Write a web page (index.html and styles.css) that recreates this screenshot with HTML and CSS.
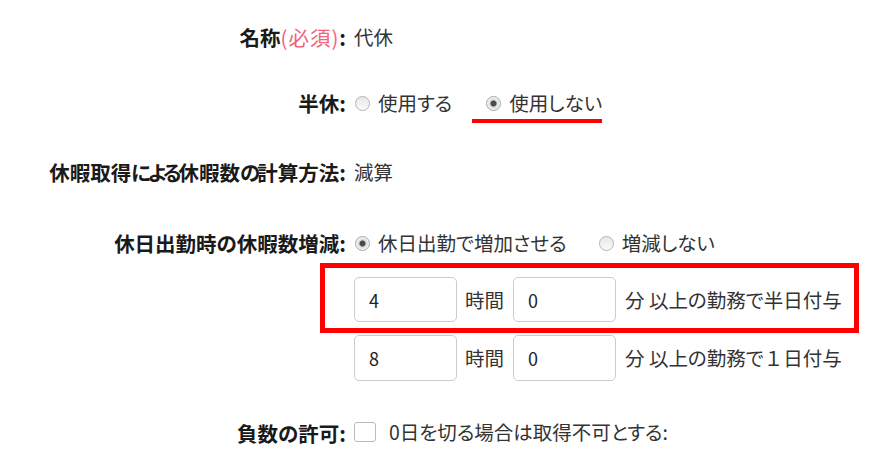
FILE: index.html
```html
<!DOCTYPE html>
<html lang="ja">
<head>
    <meta charset="UTF-8">
    <meta name="viewport" content="width=device-width, initial-scale=1.0">
    <title>休暇設定</title>
    <link rel="stylesheet" href="styles.css">
</head>
<body>
    <div class="form">
        <!-- 名称 -->
        <div class="row r-name">
            <div class="label">名称<span class="req">(必須)</span>:</div>
            <div class="value">代休</div>
        </div>

        <!-- 半休 -->
        <div class="row r-half">
            <div class="label">半休:</div>
            <div class="value options">
                <label class="option"><input type="radio" name="half" class="radio">使用する</label>
                <label class="option marked"><input type="radio" name="half" class="radio" checked>使用しない</label>
            </div>
        </div>

        <div class="row r-calc">
            <div class="label">休暇取得<span class="kn">による</span>休暇数<span class="kn">の</span>計算方法:</div>
            <div class="value">減算</div>
        </div>

        <div class="row r-holiday">
            <div class="label">休日出勤時の休暇数増減:</div>
            <div class="value options">
                <label class="option"><input type="radio" name="holiday" class="radio" checked>休日出勤で増加させる</label>
                <label class="option"><input type="radio" name="holiday" class="radio">増減しない</label>
            </div>
        </div>

        <div class="row r-times">
            <div class="label"></div>
            <div class="value">
                <div class="time-row highlight">
                    <input type="text" class="num" value="4">
                    <span class="unit">時間</span>
                    <input type="text" class="num" value="0">
                    <span class="unit-min">分 以上の勤務で半日付与</span>
                </div>
                <div class="time-row">
                    <input type="text" class="num" value="8">
                    <span class="unit">時間</span>
                    <input type="text" class="num" value="0">
                    <span class="unit-min">分 以上の勤務で<span class="fw">１</span>日付与</span>
                </div>
            </div>
        </div>

        <div class="row r-negative">
            <div class="label">負数の許可:</div>
            <div class="value">
                <label class="option"><input type="checkbox" class="check">0日を切る場合は取得不可とする:</label>
            </div>
        </div>
    </div>
</body>
</html>
```

FILE: styles.css
```css
body {
    margin: 0;
    font-family: "Noto Sans CJK JP", "Noto Sans", sans-serif;
    font-size: 19.5px;
    font-feature-settings: "palt";
    line-height: 30px;
    color: #333;
    background-color: #fff;
}
.form {
    padding-top: 22px;
}
.row {
    display: grid;
    grid-template-columns: 346px auto;
    column-gap: 8px;
    align-items: center;
    min-height: 30px;
}
.label {
    text-align: right;
    font-size: 20.5px;
    font-weight: bold;
    color: #1a1a1a;
}
.label .kn {
    letter-spacing: -3px;
}
.req {
    font-weight: normal;
    letter-spacing: 1px;
    color: #f2627a;
}
.r-half { margin-top: 36px; }
.r-calc { margin-top: 39px; }
.r-holiday { margin-top: 41px; }
.r-times { margin-top: 5px; }
.r-negative { margin-top: 36px; }

.options {
    display: flex;
    gap: 33px;
}
.r-holiday .options {
    gap: 31px;
}
.option {
    display: inline-flex;
    align-items: center;
}
.marked {
    position: relative;
}
.marked::after {
    content: "";
    position: absolute;
    left: -13px;
    right: 0;
    bottom: -5px;
    height: 4px;
    background-color: #f00;
}
.radio {
    appearance: none;
    width: 15px;
    height: 15px;
    margin: 0 8px 0 1px;
    border: 1px solid #b4b4b4;
    border-radius: 50%;
    background: linear-gradient(#e8e8e8, #fafafa);
    box-sizing: border-box;
}
.radio:checked {
    background: radial-gradient(circle, #4a4a4a 0, #4a4a4a 2.5px, #d8d8d8 3.5px, #f2f2f2 6px);
    border-color: #a8a8a8;
}
.check {
    appearance: none;
    width: 22px;
    height: 20px;
    margin: 0 13px 0 0;
    border: 1px solid #bbb;
    border-radius: 3px;
    background-color: #fff;
    box-sizing: border-box;
}

.time-row {
    display: flex;
    align-items: center;
}
.time-row + .time-row {
    margin-top: 2px;
}
.highlight {
    box-sizing: border-box;
    width: 539px;
    margin-left: -34px;
    padding: 9px 0 6px 29px;
    border: 5px solid #f00;
}
.num {
    box-sizing: border-box;
    width: 103px;
    height: 45px;
    padding: 0 14px;
    font-family: inherit;
    font-size: 18px;
    color: #222;
    border: 1px solid #ccc;
    border-radius: 5px;
    outline: none;
}
.time-row + .time-row .num {
    height: 46px;
}
.unit {
    margin: 0 9px 0 8px;
}
.unit-min {
    margin-left: 9px;
}
.fw {
    font-feature-settings: normal;
}
```
